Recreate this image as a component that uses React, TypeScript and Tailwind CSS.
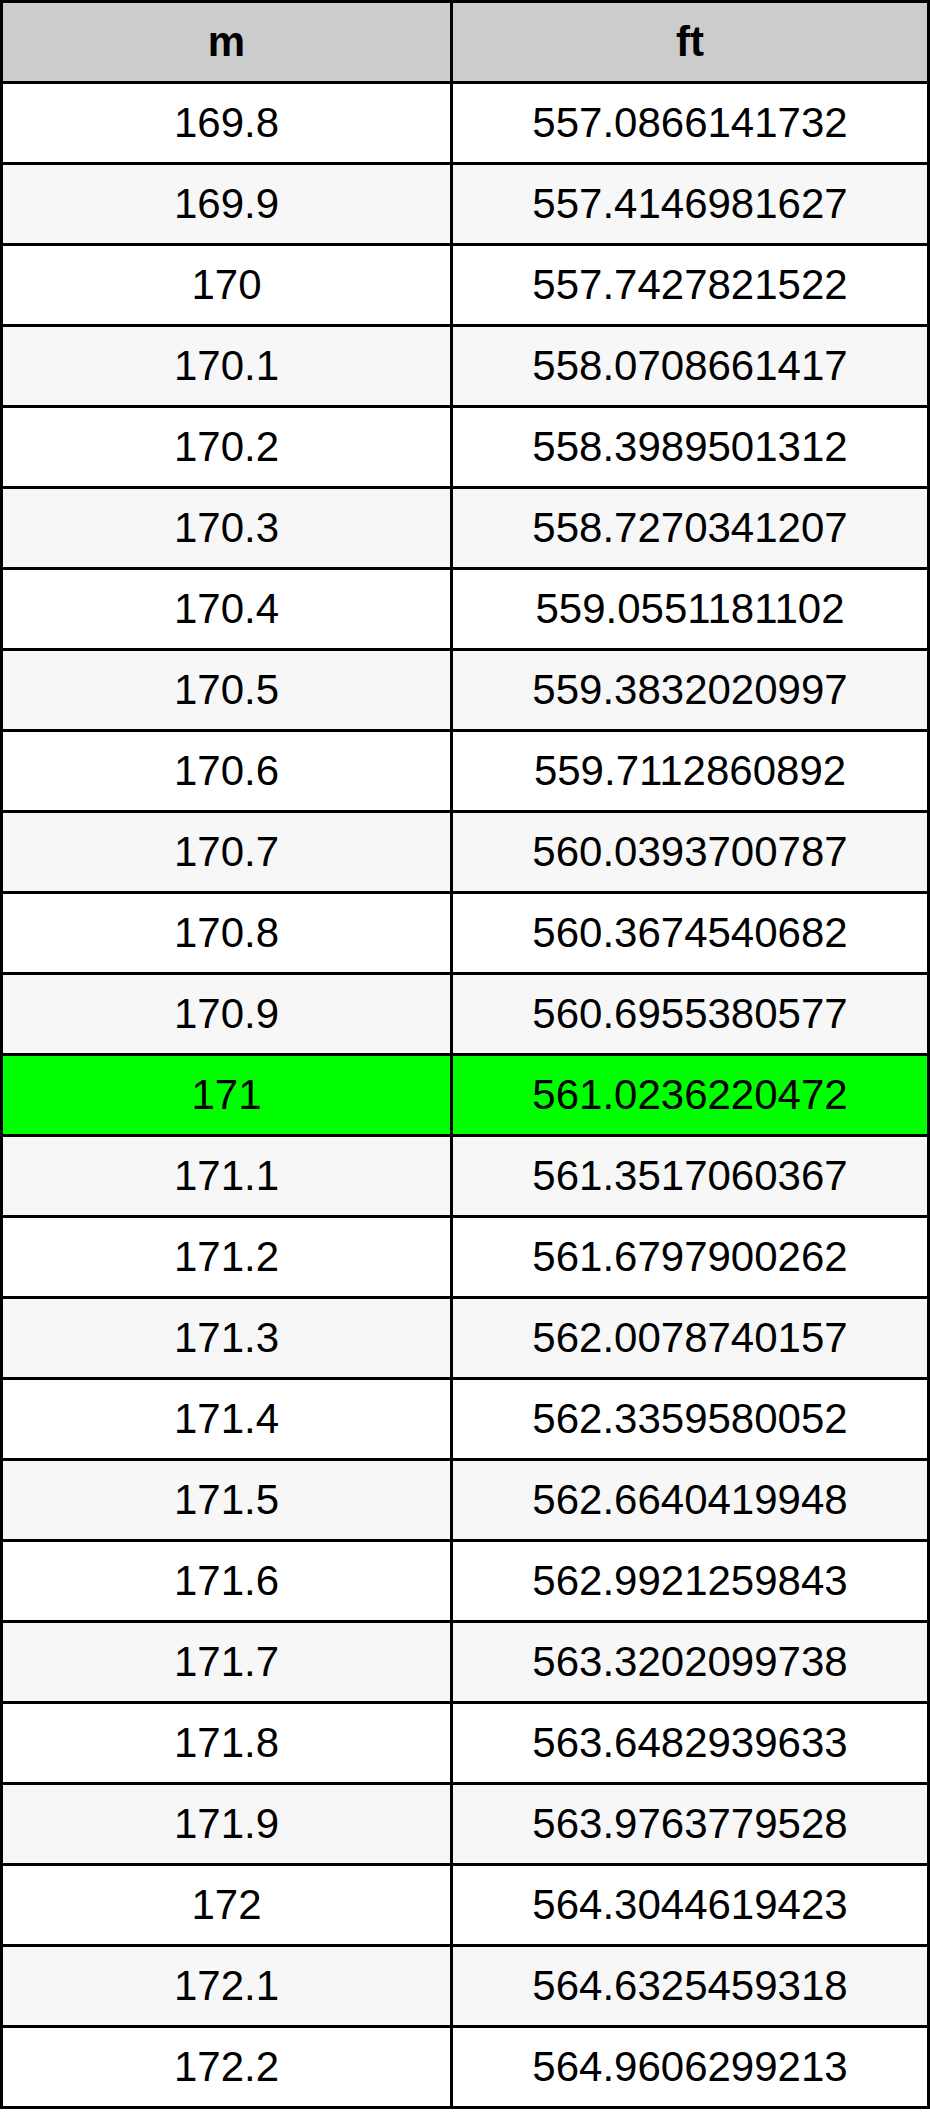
const rows: [string, string][] = [
  ["169.8", "557.0866141732"],
  ["169.9", "557.4146981627"],
  ["170", "557.7427821522"],
  ["170.1", "558.0708661417"],
  ["170.2", "558.3989501312"],
  ["170.3", "558.7270341207"],
  ["170.4", "559.0551181102"],
  ["170.5", "559.3832020997"],
  ["170.6", "559.7112860892"],
  ["170.7", "560.0393700787"],
  ["170.8", "560.3674540682"],
  ["170.9", "560.6955380577"],
  ["171", "561.0236220472"],
  ["171.1", "561.3517060367"],
  ["171.2", "561.6797900262"],
  ["171.3", "562.0078740157"],
  ["171.4", "562.3359580052"],
  ["171.5", "562.6640419948"],
  ["171.6", "562.9921259843"],
  ["171.7", "563.3202099738"],
  ["171.8", "563.6482939633"],
  ["171.9", "563.9763779528"],
  ["172", "564.3044619423"],
  ["172.1", "564.6325459318"],
  ["172.2", "564.9606299213"],
];

const HIGHLIGHT = "171";

function Cell({ children, bg, bold }: { children: string; bg: string; bold?: boolean }) {
  return (
    <div
      className={`${bg} ${bold ? "font-bold" : ""} h-[81px] flex items-center justify-center border-r-[3px] border-b-[3px] border-black text-[42px] text-black leading-none`}
    >
      {children}
    </div>
  );
}

export default function App() {
  return (
    <div className="bg-white w-[930px] font-['Liberation_Sans',Arial,sans-serif]">
      <div className="grid grid-cols-[450px_477px] border-l-[3px] border-t-[3px] border-black">
        <Cell bg="bg-[#cccccc]" bold>
          m
        </Cell>
        <Cell bg="bg-[#cccccc]" bold>
          ft
        </Cell>
        {rows.map(([m, ft], i) => {
          const bg = m === HIGHLIGHT ? "bg-[#00ff00]" : i % 2 === 0 ? "bg-white" : "bg-[#f7f7f7]";
          return [
            <Cell key={`${m}-m`} bg={bg}>
              {m}
            </Cell>,
            <Cell key={`${m}-ft`} bg={bg}>
              {ft}
            </Cell>,
          ];
        })}
      </div>
    </div>
  );
}
